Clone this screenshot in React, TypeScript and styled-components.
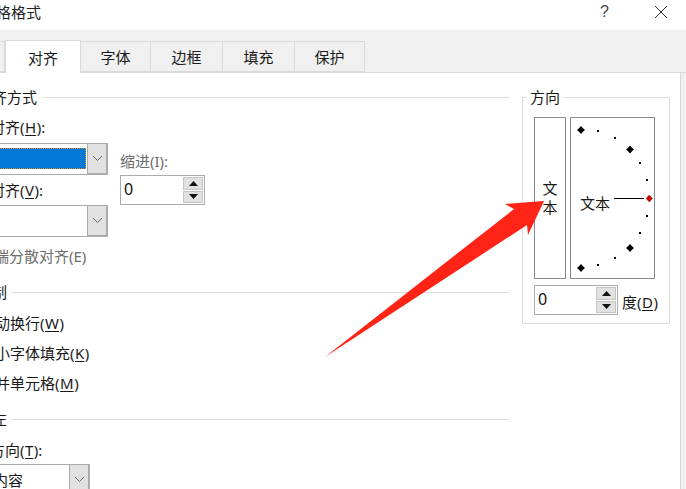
import React from "react";
import styled, { createGlobalStyle } from "styled-components";

const Global = createGlobalStyle`
  html, body { margin: 0; padding: 0; width: 686px; height: 489px; overflow: hidden; background: #fff; }
  #root { width: 686px; height: 489px; overflow: hidden; }
  * { box-sizing: border-box; }
`;

const Page = styled.div`
  position: relative;
  width: 686px;
  height: 489px;
  overflow: hidden;
  font-family: "Noto Sans", "Noto Sans CJK SC", sans-serif;
  font-size: 15px;
  line-height: 20px;
  color: #1a1a1a;
`;
const Dialog = styled.div`
  margin-left: -65px;
  width: 751px;
`;
const TitleBar = styled.div`
  height: 30px;
  display: flex;
  align-items: center;
  padding: 0 18px 6px 1px;
  color: #222;
`;
const TitleText = styled.span`
  flex: 1;
`;
const Help = styled.span`
  font-family: "Liberation Sans", sans-serif;
  font-size: 16px;
  color: #444;
  margin-right: 45px;
`;
const Strip = styled.div`
  height: 43px;
  background: #f0f0f0;
  display: flex;
  align-items: flex-end;
  border-bottom: 1px solid #d9d9d9;
`;
const Tab = styled.div<{ $active?: boolean; $w: number }>`
  width: ${(p) => p.$w}px;
  height: ${(p) => (p.$active ? 33 : 31)}px;
  margin-bottom: ${(p) => (p.$active ? -1 : 0)}px;
  padding-top: ${(p) => (p.$active ? 1 : 0)}px;
  background: ${(p) => (p.$active ? "#fff" : "#f0f0f0")};
  border: 1px solid #d9d9d9;
  border-bottom: ${(p) => (p.$active ? "none" : "1px solid #d9d9d9")};
  border-left: ${(p) => (p.$active ? "1px solid #d9d9d9" : "none")};
  display: flex;
  align-items: center;
  justify-content: center;
  color: #1a1a1a;
`;
const Panel = styled.div`
  height: 416px;
  background: #f0f0f0;
`;
const PanelBody = styled.div`
  display: flex;
  align-items: flex-start;
  width: 746px;
  height: 416px;
  background: #fff;
  border-right: 1px solid #d9d9d9;
`;
const LeftColumn = styled.div`
  width: 575px;
  padding: 14px 0 0 12px;
  flex: none;
`;
const SectionHead = styled.div<{ $top?: number }>`
  display: flex;
  align-items: center;
  gap: 5px;
  height: 20px;
  margin-top: ${(p) => p.$top ?? 0}px;
  white-space: nowrap;
  &::after {
    content: "";
    flex: 1;
    height: 1px;
    background: #dcdcdc;
  }
`;
const Indented = styled.div`
  padding-left: 13px;
`;
const Label = styled.div<{ $muted?: boolean; $top?: number; $inset?: number }>`
  height: 20px;
  margin-top: ${(p) => p.$top ?? 0}px;
  padding-left: ${(p) => p.$inset ?? 0}px;
  white-space: nowrap;
  color: ${(p) => (p.$muted ? "#6d6d6d" : "#1a1a1a")};
`;
const Key = styled.span`
  padding: 0 0.5px;
  text-decoration: underline;
  text-underline-offset: 2px;
`;
const AlignRow = styled.div`
  display: flex;
  align-items: flex-start;
  gap: 12px;
  margin-top: 6px;
`;
const AlignFields = styled.div`
  width: 148px;
`;
const IndentField = styled.div`
  margin-top: 8px;
`;
const Combo = styled.div<{ $w?: number; $top?: number }>`
  display: flex;
  width: ${(p) => p.$w ?? 148}px;
  height: 32px;
  margin-top: ${(p) => p.$top ?? 0}px;
  background: #fff;
  border: 1px solid #ababab;
  align-items: stretch;
`;
const ComboValue = styled.div<{ $selected?: boolean }>`
  flex: 1;
  margin: ${(p) => (p.$selected ? "4px 1px 5px 0" : "0")};
  background: ${(p) => (p.$selected ? "#0078d7" : "transparent")};
  outline: ${(p) => (p.$selected ? "1px dotted #e08a1e" : "none")};
  outline-offset: -1px;
  padding-left: 2px;
  line-height: 30px;
  white-space: nowrap;
  overflow: hidden;
`;
const ComboButton = styled.div`
  width: 21px;
  flex: none;
  background: #e1e1e1;
  border: 1px solid #ababab;
  border-width: 1px 2px 2px 1px;
  margin: -1px -1px -1px 0;
  display: flex;
  align-items: center;
  justify-content: center;
`;
const Spin = styled.div`
  display: flex;
  width: 85px;
  height: 30px;
  border: 1px solid #ababab;
  background: #fff;
  margin-top: 4px;
`;
const SpinValue = styled.div`
  flex: 1;
  padding-left: 3px;
  font-size: 16px;
  line-height: 26px;
  color: #111;
`;
const SpinButtons = styled.div`
  width: 20px;
  flex: none;
  display: flex;
  flex-direction: column;
  gap: 1px;
  padding: 1px 0;
  margin-right: 1px;
`;
const SpinButton = styled.div`
  flex: 1;
  background: #e1e1e1;
  border: 1px solid #c4c4c4;
  display: flex;
  align-items: center;
  justify-content: center;
`;
const Check = styled.div<{ $top?: number }>`
  height: 20px;
  margin-top: ${(p) => p.$top ?? 10}px;
  padding-left: 33px;
  white-space: nowrap;
`;
const Group = styled.div`
  position: relative;
  flex: none;
  width: 148px;
  height: 227px;
  margin: 24px 0 0 12px;
  border: 1px solid #dcdcdc;
  padding: 19px 11px 0;
`;
const GroupTitle = styled.div`
  position: absolute;
  top: -11px;
  left: 4px;
  padding: 0 3px;
  background: #fff;
`;
const Preview = styled.div`
  display: flex;
  gap: 4px;
  height: 162px;
`;
const VerticalBox = styled.div`
  width: 32px;
  border: 1px solid #868a8e;
  display: flex;
  align-items: center;
  justify-content: center;
  text-align: center;
  line-height: 19px;
`;
const Dial = styled.div`
  position: relative;
  width: 85px;
  border: 1px solid #868a8e;
`;
const DialSvg = styled.svg`
  display: block;
`;
const DialText = styled.div`
  position: absolute;
  left: 9px;
  top: 75px;
`;
const DegreeRow = styled.div`
  display: flex;
  align-items: flex-end;
  gap: 4px;
  margin-top: 2px;
`;
const DegreeLabel = styled.div`
  height: 20px;
  line-height: 22px;
  white-space: nowrap;
  margin-bottom: 4px;
`;
const Arrow = styled.svg`
  position: absolute;
  left: 0;
  top: 0;
  pointer-events: none;
`;
const CloseIcon = styled.svg`
  display: block;
`;

const Chevron = () => (
  <svg width="11" height="7" viewBox="0 0 11 7">
    <path d="M1 1l4.5 4.5L10 1" fill="none" stroke="#666" strokeWidth="1" />
  </svg>
);
const Up = () => (
  <svg width="9" height="5" viewBox="0 0 9 5">
    <path d="M4.5 0L9 5H0z" fill="#111" />
  </svg>
);
const Down = () => (
  <svg width="9" height="5" viewBox="0 0 9 5">
    <path d="M0 0h9L4.5 5z" fill="#111" />
  </svg>
);
const SpinBox = () => (
  <Spin>
    <SpinValue>0</SpinValue>
    <SpinButtons>
      <SpinButton><Up /></SpinButton>
      <SpinButton><Down /></SpinButton>
    </SpinButtons>
  </Spin>
);

const big = [[10, 12], [59, 31.5], [59, 130], [10, 150]];
const small = [[27, 13], [44, 20], [69, 45], [76, 62], [76, 98], [69, 115], [44, 140], [27, 147]];

export default function App() {
  return (
    <Page>
      <Global />
      <Dialog>
        <TitleBar>
          <TitleText>设置单元格格式</TitleText>
          <Help>?</Help>
          <CloseIcon width="14" height="14" viewBox="0 0 14 14">
            <path d="M1 1l12 12M13 1L1 13" stroke="#333" strokeWidth="1" />
          </CloseIcon>
        </TitleBar>
        <Strip>
          <Tab $w={70}>数字</Tab>
          <Tab $active $w={76}>对齐</Tab>
          <Tab $w={70}>字体</Tab>
          <Tab $w={72}>边框</Tab>
          <Tab $w={72}>填充</Tab>
          <Tab $w={70}>保护</Tab>
        </Strip>
        <Panel>
          <PanelBody>
            <LeftColumn>
              <SectionHead>文本对齐方式</SectionHead>
              <Indented>
                <Label $top={10}>水平对齐(<Key>H</Key>):</Label>
                <AlignRow>
                  <AlignFields>
                    <Combo>
                      <ComboValue $selected />
                      <ComboButton><Chevron /></ComboButton>
                    </Combo>
                    <Label $top={5}>垂直对齐(<Key>V</Key>):</Label>
                    <Combo $top={5}>
                      <ComboValue />
                      <ComboButton><Chevron /></ComboButton>
                    </Combo>
                  </AlignFields>
                  <IndentField>
                    <Label $muted>缩进(I):</Label>
                    <SpinBox />
                  </IndentField>
                </AlignRow>
                <Label $muted $top={9} $inset={19}>两端分散对齐(E)</Label>
              </Indented>
              <SectionHead $top={16}>文本控制</SectionHead>
              <Check $top={11}>自动换行(<Key>W</Key>)</Check>
              <Check>缩小字体填充(<Key>K</Key>)</Check>
              <Check>合并单元格(<Key>M</Key>)</Check>
              <SectionHead $top={16}>从右到左</SectionHead>
              <Indented>
                <Label $top={11}>文字方向(<Key>T</Key>):</Label>
                <Combo $w={130} $top={4}>
                  <ComboValue>根据内容</ComboValue>
                  <ComboButton><Chevron /></ComboButton>
                </Combo>
              </Indented>
            </LeftColumn>
            <Group>
              <GroupTitle>方向</GroupTitle>
              <Preview>
                <VerticalBox>文<br />本</VerticalBox>
                <Dial>
                  <DialSvg width="83" height="160" viewBox="0 0 83 160">
                    {big.map(([x, y]) => (
                      <path key={`${x}-${y}`} d={`M${x} ${y - 4}l2 2.2 2 1.8-2 1.8-2 2.2-2-2.2-2-1.8 2-1.8z`} fill="#000" />
                    ))}
                    {small.map(([x, y]) => (
                      <rect key={`${x}-${y}`} x={x - 1} y={y - 1} width="2" height="2" fill="#000" />
                    ))}
                    <path d="M43 80.5h30" stroke="#000" strokeWidth="1" />
                    <path d="M78.3 77l3.2 3.5-3.2 3.5-3.2-3.5z" fill="#e00000" stroke="#333" strokeWidth=".5" />
                  </DialSvg>
                  <DialText>文本</DialText>
                </Dial>
              </Preview>
              <DegreeRow>
                <SpinBox />
                <DegreeLabel>度(<Key>D</Key>)</DegreeLabel>
              </DegreeRow>
            </Group>
          </PanelBody>
        </Panel>
      </Dialog>
      <Arrow width="686" height="489" viewBox="0 0 686 489">
        <path d="M325 357L514 209 505 204 544 201 528 235 527 225z" fill="#ff2416" />
      </Arrow>
    </Page>
  );
}
